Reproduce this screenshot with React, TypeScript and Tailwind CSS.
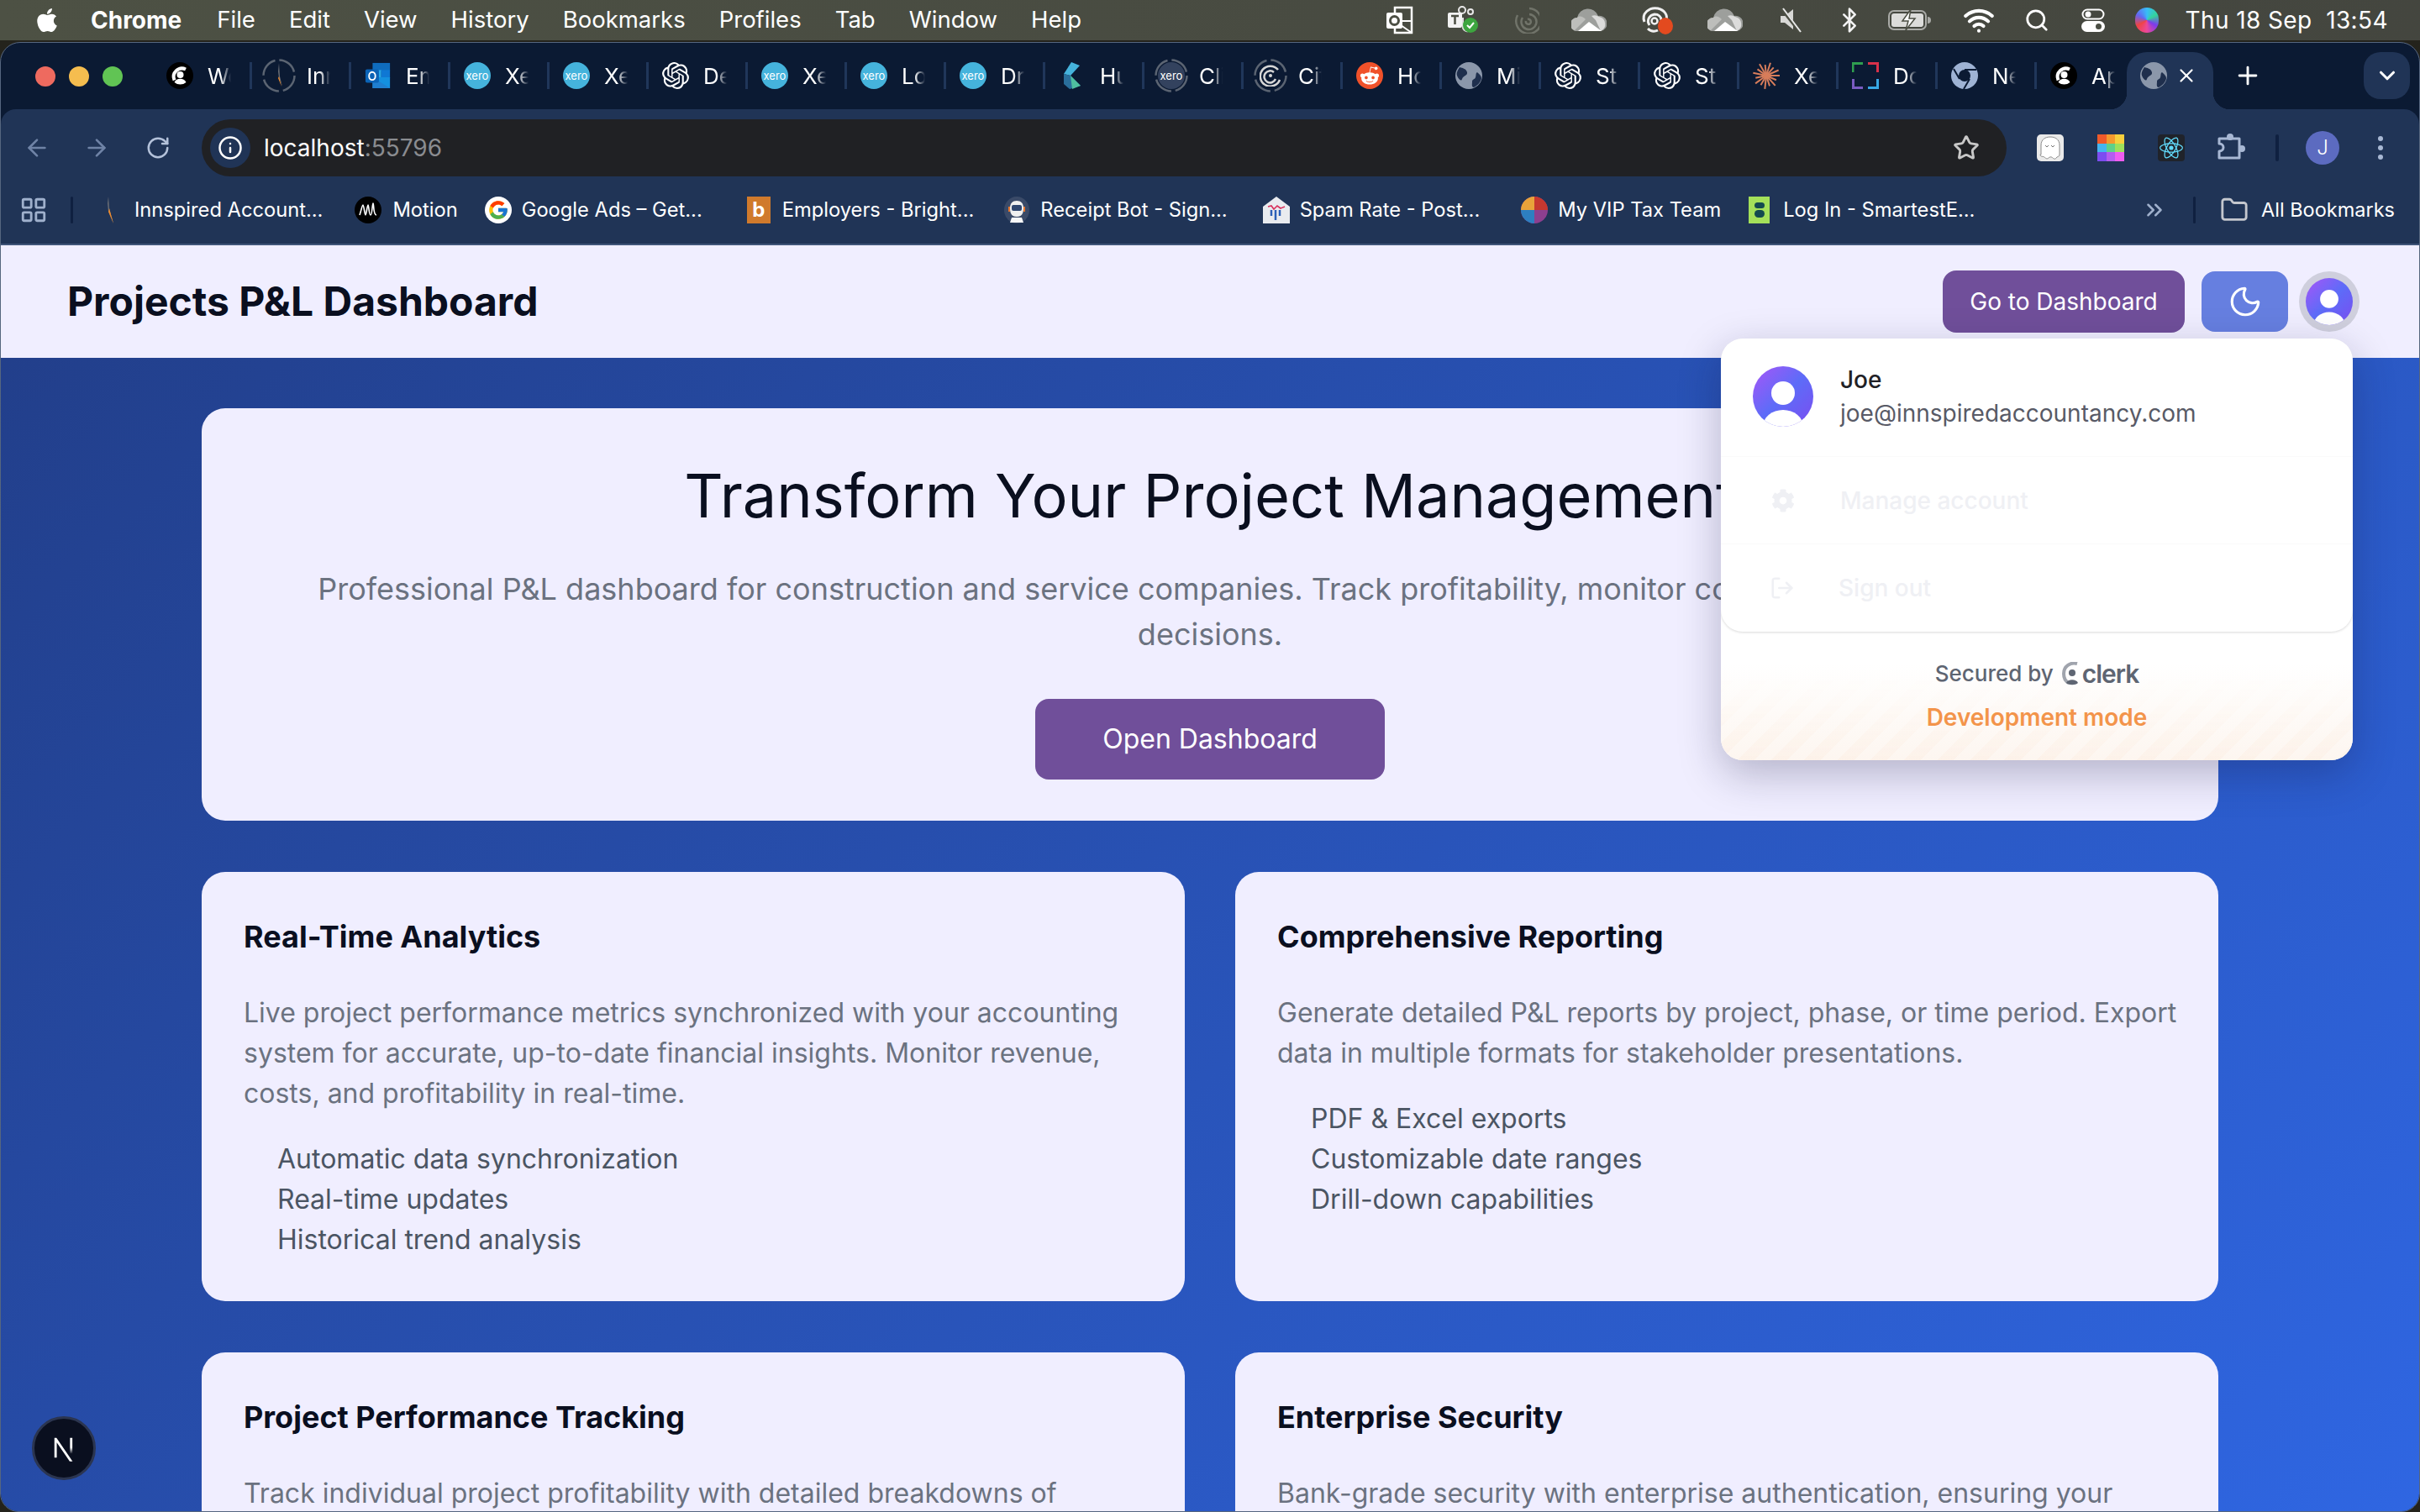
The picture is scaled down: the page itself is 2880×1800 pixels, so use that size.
import { ArrowLeft, ArrowRight, RotateCw, Info, Star, Plus, ChevronDown, Moon, ChevronsRight, Folder, LayoutGrid, Search, Bluetooth, Wifi, LogOut, X } from "lucide-react";
import { FaApple, FaCog, FaRedditAlien } from "react-icons/fa";
import { FcGoogle } from "react-icons/fc";
import { SiOpenai, SiReact } from "react-icons/si";
import type { ReactNode } from "react";

const font = "font-['Inter','Liberation_Sans',sans-serif]";

function Xero({ dim }: { dim?: boolean }) {
  return (
    <div className={`flex h-8 w-8 items-center justify-center rounded-full text-[13px] leading-none text-white ${dim ? "bg-[#33425e]" : "bg-[#45b3dc]"}`}>xero</div>
  );
}

function ClerkMark({ size = 32 }: { size?: number }) {
  return (
    <svg width={size} height={size} viewBox="0 0 32 32">
      <circle cx="16" cy="16" r="16" fill="#000" />
      <path d="M23 8.5a10 10 0 0 0-13.5 13" fill="none" stroke="#fff" strokeWidth="4" />
      <circle cx="16.5" cy="15" r="4" fill="#fff" />
      <path d="M9.5 24a8 8 0 0 1 14 0 11 11 0 0 1-14 0z" fill="#fff" />
    </svg>
  );
}

function Globe({ size = 32 }: { size?: number }) {
  return (
    <svg width={size} height={size} viewBox="0 0 32 32">
      <circle cx="16" cy="16" r="16" fill="#8b97aa" />
      <path d="M5 6c4 1 8 2 9 6s-5 4-6 8-5-1-6-4 1-7 3-10zM26 12c2 2 5 4 5 7s-4 9-9 11c-3 0-2-4-2-7s3-2 4-5 0-5 2-6z" fill="#1f2f4d" />
    </svg>
  );
}

function RingIcon({ children }: { children: ReactNode }) {
  return (
    <div className="relative flex h-10 w-10 shrink-0 items-center justify-center">
      <svg width="40" height="40" viewBox="0 0 40 40" className="absolute inset-0">
        <circle cx="20" cy="20" r="18.5" fill="none" stroke="#5b6472" strokeWidth="2.5" strokeDasharray="24 5" />
      </svg>
      {children}
    </div>
  );
}

function Spiral({ size = 26, color = "#d6d6d6" }: { size?: number; color?: string }) {
  return (
    <svg width={size} height={size} viewBox="0 0 26 26" fill="none" stroke={color} strokeWidth="2.5">
      <path d="M22 6a12 12 0 1 0 2 12M17 9a7 7 0 1 0 2 8" />
      <circle cx="13" cy="13" r="2" fill={color} stroke="none" />
    </svg>
  );
}

function Outlook() {
  return (
    <svg width="34" height="34" viewBox="0 0 34 34">
      <rect x="10" y="1" width="22" height="10" fill="#0f6cbd" />
      <rect x="10" y="10" width="11" height="10" fill="#28a8ea" />
      <rect x="21" y="10" width="11" height="10" fill="#0f78d4" />
      <path d="M10 19h22v14H10z" fill="#1490df" />
      <path d="M10 19l22 14H10z" fill="#1f7fd0" />
      <rect x="1" y="9" width="17" height="17" rx="2" fill="#0b63b6" />
      <ellipse cx="9.5" cy="17.5" rx="4" ry="5" fill="none" stroke="#fff" strokeWidth="2" />
    </svg>
  );
}

function Claude() {
  const rays = [0, 24, 48, 72, 96, 120, 144, 168, 192, 216, 240, 264, 288, 312, 336];
  return (
    <svg width="32" height="32" viewBox="0 0 32 32">
      {rays.map((a, i) => (
        <line key={a} x1="16" y1="16" x2={16 + (i % 2 ? 13 : 16) * Math.cos((a * Math.PI) / 180)} y2={16 + (i % 2 ? 13 : 16) * Math.sin((a * Math.PI) / 180)} stroke="#d77d5b" strokeWidth="2" />
      ))}
    </svg>
  );
}

function DocIcon() {
  return (
    <svg width="32" height="32" viewBox="0 0 32 32" fill="none" strokeWidth="3">
      <path d="M1 12V1.5h12" stroke="#2f9e4f" />
      <path d="M19 1.5h11.5V12" stroke="#d8314a" />
      <path d="M30.5 20v10.5H19" stroke="#37a8e6" />
      <path d="M13 30.5H1.5V20" stroke="#7a5bc2" />
    </svg>
  );
}

function Hubdoc() {
  return (
    <svg width="32" height="32" viewBox="0 0 32 32">
      <path d="M15 0l10 4-11 12-8-2z" fill="#45b3dc" />
      <path d="M6 14l8 2 12 12-13 4-7-6z" fill="#2a6f9c" />
      <path d="M14 16l12 12-10 4z" fill="#4fbf9f" />
    </svg>
  );
}

function BrightIcon() {
  return (
    <div className="flex h-8 w-[28px] items-center justify-center bg-[#d07a2c] text-[24px] font-bold leading-none text-white">b</div>
  );
}

function MotionIcon() {
  return (
    <svg width="32" height="32" viewBox="0 0 32 32">
      <circle cx="16" cy="16" r="16" fill="#000" />
      <path d="M6 22c2-6 3-12 4-12s2 12 3 12 2-12 3-12 1 12 3 12 2-14 3-14 0 14 4 14" fill="none" stroke="#fff" strokeWidth="1.6" />
    </svg>
  );
}

function ReceiptBot() {
  return (
    <svg width="32" height="32" viewBox="0 0 32 32">
      <ellipse cx="16" cy="16" rx="15" ry="16" fill="#3a4a68" />
      <path d="M8 14c0-6 3-9 8-9s8 3 8 9-2 10-8 10-8-4-8-10z" fill="#f0f0f0" />
      <rect x="10" y="10" width="12" height="7" rx="2" fill="#2f4770" />
      <path d="M10 25h12l2 6H8z" fill="#f7f7f7" />
      <path d="M6 12h2v6H6zM24 12h2v6h-2z" fill="#e8772e" />
    </svg>
  );
}

function SpamIcon() {
  return (
    <svg width="32" height="32" viewBox="0 0 32 32">
      <path d="M0 12L16 0l16 12v20H0z" fill="#e9ebef" />
      <path d="M6 12l4-1 3 4 4-4 4 3 5-2" fill="none" stroke="#d8315b" strokeWidth="1.6" />
      <path d="M10 16v7M15 16v12M20 16v7" stroke="#2b5fb8" strokeWidth="2.5" />
    </svg>
  );
}

function TaxIcon() {
  return (
    <svg width="32" height="32" viewBox="0 0 32 32">
      <ellipse cx="16" cy="16" rx="16" ry="16" fill="#8c3f8f" />
      <path d="M16 0a16 16 0 0 0-16 16h16z" fill="#e8a33a" />
      <path d="M16 0a16 16 0 0 1 16 16H16z" fill="#c6382f" />
      <path d="M0 16a16 16 0 0 0 16 16V16z" fill="#2d7fc1" />
    </svg>
  );
}

function SmartestIcon() {
  return (
    <div className="flex h-8 w-[25px] flex-col items-center justify-center gap-[2px] bg-[#a4e05a]">
      <div className="h-[7px] w-3 rounded-full bg-[#134a4f]" />
      <div className="h-[9px] w-3 rounded-full bg-[#134a4f]" />
    </div>
  );
}

function Cloud() {
  return (
    <svg width="42" height="28" viewBox="0 0 42 28">
      <path d="M7 27a8 8 0 0 1 0-16 13 13 0 0 1 25-2 9 9 0 0 1 3 18z" fill="#9d9f9c" />
      <path d="M7 27a8 8 0 0 1 0-16c3-3 7-1 10 2L4 26z" fill="#bdbebb" />
      <path d="M24 9a9 9 0 0 1 9 1 9 9 0 0 1 2 17l-6-13z" fill="#dcdcdb" />
      <path d="M8 27l13-11 15 11z" fill="#fff" />
    </svg>
  );
}

const tabs: { icon: ReactNode; t: string }[] = [
  { icon: <ClerkMark />, t: "Workspace" },
  { icon: <RingIcon><svg width="24" height="30" viewBox="0 0 24 30"><path d="M12 0l1 16 3 12-4-10-1-8z" fill="#6b6f76" /><path d="M12 16l3 12-4-10z" fill="#ef8a2a" /></svg></RingIcon>, t: "Innspired" },
  { icon: <Outlook />, t: "Email" },
  { icon: <Xero />, t: "Xero" },
  { icon: <Xero />, t: "Xero" },
  { icon: <SiOpenai size={32} color="#fff" />, t: "Deep" },
  { icon: <Xero />, t: "Xero" },
  { icon: <Xero />, t: "Login" },
  { icon: <Xero />, t: "Dr" },
  { icon: <Hubdoc />, t: "Hubdoc" },
  { icon: <RingIcon><Xero dim /></RingIcon>, t: "Client" },
  { icon: <RingIcon><Spiral /></RingIcon>, t: "Cita" },
  { icon: <div className="flex h-8 w-8 items-center justify-center rounded-full bg-[#f0512a]"><FaRedditAlien size={24} color="#fff" /></div>, t: "Home" },
  { icon: <Globe />, t: "Mi" },
  { icon: <SiOpenai size={32} color="#fff" />, t: "St" },
  { icon: <SiOpenai size={32} color="#fff" />, t: "St" },
  { icon: <Claude />, t: "Xero" },
  { icon: <DocIcon />, t: "Doc" },
  { icon: <svg width="32" height="32" viewBox="0 0 32 32"><circle cx="16" cy="16" r="16" fill="#9fb3d4" /><circle cx="16" cy="16" r="7" fill="#0b1a33" /><path d="M16 9h14M10 20L3 8M22 20l-7 12" stroke="#0b1a33" strokeWidth="2" /></svg>, t: "New" },
  { icon: <ClerkMark />, t: "App" },
];

const bookmarks: { icon: ReactNode; t: string; cls: string }[] = [
  { icon: <svg width="16" height="32" viewBox="0 0 16 32"><path d="M7 0l1 14 5 18-6-14-1-10z" fill="#6b6f76" /><path d="M8 14l5 18-6-14z" fill="#ef8a2a" /></svg>, t: "Innspired Account...", cls: "ml-[35px] gap-[22px]" },
  { icon: <MotionIcon />, t: "Motion", cls: "ml-[38px] gap-[13px]" },
  { icon: <div className="flex h-8 w-8 items-center justify-center rounded-full bg-white"><FcGoogle size={26} /></div>, t: "Google Ads – Get...", cls: "ml-[32px] gap-[12px]" },
  { icon: <BrightIcon />, t: "Employers - Bright...", cls: "ml-[53px] gap-[14px]" },
  { icon: <ReceiptBot />, t: "Receipt Bot - Sign...", cls: "ml-[35px] gap-[12px]" },
  { icon: <SpamIcon />, t: "Spam Rate - Post...", cls: "ml-[42px] gap-[12px]" },
  { icon: <TaxIcon />, t: "My VIP Tax Team", cls: "ml-[49px] gap-[12px]" },
  { icon: <SmartestIcon />, t: "Log In - SmartestE...", cls: "ml-[33px] gap-[16px]" },
];

const status: { icon: ReactNode; cls: string }[] = [
  { cls: "", icon: <svg width="32" height="34" viewBox="0 0 32 34"><path d="M10 2h20v30H10z" fill="none" stroke="#fff" strokeWidth="2.5" /><path d="M10 18h20v14H10z" fill="none" stroke="#fff" strokeWidth="2" /><path d="M10 18l20 14" stroke="#fff" strokeWidth="2" /><rect x="0" y="8" width="19" height="19" rx="2" fill="#fff" /><circle cx="9.5" cy="17.5" r="5" fill="none" stroke="#4b4e43" strokeWidth="3" /></svg> },
  { cls: "ml-[15px]", icon: <svg width="36" height="34" viewBox="0 0 36 34"><circle cx="17" cy="5" r="4" fill="none" stroke="#e8e8e8" strokeWidth="2" /><circle cx="27" cy="7" r="3" fill="none" stroke="#e8e8e8" strokeWidth="2" /><rect x="0" y="8" width="17" height="18" rx="2" fill="#f2f2f2" /><path d="M4 12h9M8.5 12v10" stroke="#4b4e43" strokeWidth="2.5" /><path d="M18 14v10a5 5 0 0 0 6 6" fill="none" stroke="#ddd" strokeWidth="2" /><circle cx="27" cy="23" r="9" fill="#3da53f" /><path d="M23 23l3 3 5-6" fill="none" stroke="#fff" strokeWidth="2" /></svg> },
  { cls: "ml-[15px]", icon: <svg width="32" height="32" viewBox="0 0 32 32" fill="none" stroke="#707369" strokeWidth="2.5"><path d="M20 2a15 15 0 1 1-14 8M20 9a9 9 0 1 1-8 4M18 15a3 3 0 1 1-2 2" /></svg> },
  { cls: "ml-[15px]", icon: <Cloud /> },
  { cls: "ml-[20px]", icon: <svg width="40" height="36" viewBox="0 0 40 36"><path d="M6 20C2 10 12 2 22 4c8 2 12 8 10 14" fill="none" stroke="#f0f0f0" strokeWidth="3" /><path d="M12 24c-4-6 0-12 6-13 5 0 8 3 8 7" fill="none" stroke="#f0f0f0" strokeWidth="3" /><circle cx="18" cy="19" r="3.5" fill="none" stroke="#f0f0f0" strokeWidth="2.5" /><path d="M10 28c4 4 8 4 12 2" fill="none" stroke="#f0f0f0" strokeWidth="3" /><ellipse cx="31" cy="25" rx="9" ry="10" fill="#e34a1f" /></svg> },
  { cls: "ml-[22px]", icon: <Cloud /> },
  { cls: "ml-[18px]", icon: <svg width="28" height="30" viewBox="0 0 28 30"><path d="M2 10h5l10-8v24L7 18H2z" fill="#d8d8d6" /><path d="M3 1l22 28" stroke="#4b4e43" strokeWidth="4" /><path d="M5 1l21 28" stroke="#e8e8e8" strokeWidth="2" /></svg> },
  { cls: "ml-[10px]", icon: <Bluetooth size={32} color="#f2f2f2" strokeWidth={2} /> },
  { cls: "ml-[12px]", icon: <svg width="52" height="26" viewBox="0 0 52 26"><rect x="1" y="2" width="44" height="22" rx="6" fill="none" stroke="#a9aaa6" strokeWidth="2" /><rect x="4" y="5" width="38" height="16" rx="3" fill="#dcdcda" /><path d="M27 0L17 14h7l-3 11 11-14h-7z" fill="#fff" stroke="#4b4e43" strokeWidth="1.5" /><path d="M47 9a4 4 0 0 1 0 8z" fill="#a9aaa6" /></svg> },
  { cls: "ml-[22px]", icon: <Wifi size={38} color="#fff" strokeWidth={2.6} /> },
  { cls: "ml-[9px]", icon: <Search size={30} color="#fff" strokeWidth={2.2} /> },
  { cls: "ml-[7px]", icon: <svg width="28" height="28" viewBox="0 0 28 28"><rect x="1.5" y="1.5" width="25" height="11" rx="5.5" fill="none" stroke="#fff" strokeWidth="2" /><circle cx="8" cy="7" r="3.5" fill="#fff" /><rect x="0" y="15" width="28" height="13" rx="6.5" fill="#fff" /><circle cx="20.5" cy="21.5" r="3.5" fill="#4b4e43" /></svg> },
  { cls: "ml-[4px]", icon: <div className="h-[30px] w-[28px] rounded-full bg-[conic-gradient(#38bdf8,#34d399,#7c3aed,#ec4899,#ef4444,#6366f1,#38bdf8)]" /> },
];

function MenuBar() {
  const items = ["File", "Edit", "View", "History", "Bookmarks", "Profiles", "Tab", "Window", "Help"];
  return (
    <div className="flex h-[48px] items-center bg-[linear-gradient(to_right,#4d5144,#44463f)] pl-[40px] pr-[38px] text-[27.5px] text-white">
      <FaApple size={32} color="#fff" />
      <span className="ml-[36px] text-[28px] font-bold">Chrome</span>
      <div className="ml-[42px] flex gap-[40px]">
        {items.map((m) => (
          <span key={m}>{m}</span>
        ))}
      </div>
      <div className="ml-auto flex items-center">
        {status.map((s, i) => (
          <div key={i} className={`flex w-[60px] justify-center ${s.cls}`}>{s.icon}</div>
        ))}
      </div>
      <span className="ml-[16px] whitespace-nowrap text-[28px] tracking-[0.4px]">Thu 18 Sep&nbsp; 13:54</span>
    </div>
  );
}

function TabStrip() {
  return (
    <div className="flex h-[79px] shrink-0 items-start pl-[41px] pr-[11px]">
      <div className="mt-[28px] flex gap-[16px]">
        <div className="h-6 w-6 rounded-full bg-[#ee6a5f]" />
        <div className="h-6 w-6 rounded-full bg-[#f5bd4f]" />
        <div className="h-6 w-6 rounded-full bg-[#61c454]" />
      </div>
      <div className="ml-[36px] mt-[23px] flex">
        {tabs.map((tab, i) => (
          <div key={i} className="flex h-[32px] w-[118px] items-center border-r-[3px] border-[#20365a] pl-[16px] last:border-r-0">
            <div className="flex h-8 w-8 items-center justify-center">{tab.icon}</div>
            <span className="ml-[17px] w-[28px] overflow-hidden whitespace-nowrap text-[26px] text-white [mask-image:linear-gradient(to_right,#000_55%,transparent)]">{tab.t}</span>
          </div>
        ))}
      </div>
      <div className="relative z-[1] ml-[-11px] mt-[11px] flex h-[68px] w-[103px] items-center rounded-t-[24px] bg-[#203456] pb-[12px] pl-[16px]">
        <div className="absolute bottom-0 left-[-20px] h-[20px] w-[20px] bg-[radial-gradient(circle_at_0_0,transparent_20px,#203456_20.5px)]" />
        <div className="absolute bottom-0 right-[-20px] h-[20px] w-[20px] bg-[radial-gradient(circle_at_100%_0,transparent_20px,#203456_20.5px)]" />
        <Globe />
        <X size={26} color="#fff" className="ml-[10px]" />
      </div>
      <Plus size={34} color="#fff" className="ml-[24px] mt-[22px]" />
      <div className="ml-auto mt-[11px] flex h-[56px] w-[55px] items-center justify-center rounded-[20px] bg-[#203456]">
        <ChevronDown size={30} color="#fff" strokeWidth={2.5} />
      </div>
    </div>
  );
}

function GhostExt() {
  return (
    <svg width="32" height="32" viewBox="0 0 32 32">
      <rect width="32" height="32" rx="5" fill="#e9e9e9" />
      <path d="M5 24V13C5 6 10 3 16 3s11 3 11 10v11c0 3-3 2-4 4s-3 1-4 0-3-2-5 0-4 0-5-1-5 0-5-3z" fill="#fff" stroke="#8c8c8c" strokeWidth="1" />
      <path d="M10 13l2 2 2-2M17 13l2 2 2-2" fill="none" stroke="#777" strokeWidth="1" />
    </svg>
  );
}

function PuzzleExt() {
  return (
    <svg width="34" height="34" viewBox="0 0 34 34" fill="none">
      <path d="M2 6h24v23H2v-8c3 0 5-2 5-4.500S5 12 2 12z" stroke="#a8b8d4" strokeWidth="3" strokeLinejoin="round" />
      <circle cx="15" cy="4" r="4" fill="#a8b8d4" />
      <circle cx="29" cy="18" r="4" fill="#a8b8d4" />
    </svg>
  );
}

function Toolbar() {
  return (
    <div className="flex h-[84px] shrink-0 items-start rounded-t-[18px] bg-[#203456] pl-[27px] pt-[12px]">
      <div className="flex h-[68px] items-center">
        <ArrowLeft size={32} color="#6f83a6" />
        <ArrowRight size={32} color="#6f83a6" className="ml-[39px]" />
        <RotateCw size={30} color="#b4c2da" className="ml-[42px]" />
        <div className="ml-[37px] flex h-[68px] w-[2148px] items-center rounded-full bg-[#202124] pl-[10px] pr-[32px]">
          <div className="flex h-[48px] w-[48px] items-center justify-center rounded-full bg-[#203456]">
            <Info size={30} color="#fff" />
          </div>
          <span className="ml-[16px] text-[28px] text-white">localhost<span className="text-[#8a8c90]">:55796</span></span>
          <Star size={32} color="#c8c8c8" className="ml-auto" strokeWidth={2.2} />
        </div>
        <div className="ml-[36px]"><GhostExt /></div>
        <div className="ml-[40px] grid h-8 w-8 grid-cols-3">
          {["#ef5a2a", "#f59a2d", "#f7cf3c", "#45b5f0", "#5fd08a", "#9ee05a", "#7c4df0", "#b45cf0", "#ef5cf0"].map((c) => (
            <div key={c} className="h-full w-full" style={{ background: c }} />
          ))}
        </div>
        <div className="ml-[40px] flex h-8 w-8 items-center justify-center rounded-[4px] bg-[#20232a]">
          <SiReact size={28} color="#61dafb" />
        </div>
        <div className="ml-[39px]"><PuzzleExt /></div>
        <div className="ml-[35px] h-[32px] w-[4px] rounded-full bg-[#0f2040]" />
        <div className="ml-[32px] flex h-10 w-10 items-center justify-center rounded-full bg-[#5c6bc0] text-[24px] font-light text-white">J</div>
        <div className="ml-[46px] flex flex-col gap-[5px]">
          <div className="h-[6px] w-[6px] rounded-full bg-[#a8b8d4]" />
          <div className="h-[6px] w-[6px] rounded-full bg-[#a8b8d4]" />
          <div className="h-[6px] w-[6px] rounded-full bg-[#a8b8d4]" />
        </div>
      </div>
    </div>
  );
}

function BookmarksBar() {
  return (
    <div className="flex h-[78px] shrink-0 items-center border-b-[2px] border-[#3f5478] bg-[#203456] pb-[4px] pl-[22px] text-[23.7px] text-white">
      <LayoutGrid size={34} color="#9fb0cc" />
      <div className="ml-[27px] h-[32px] w-[3px] rounded-full bg-[#0f2040]" />
      {bookmarks.map((b) => (
        <div key={b.t} className={`flex items-center whitespace-nowrap ${b.cls}`}>
          {b.icon}
          <span>{b.t}</span>
        </div>
      ))}
      <ChevronsRight size={30} color="#9fb0cc" className="ml-auto" />
      <div className="ml-[31px] h-[32px] w-[3px] rounded-full bg-[#0f2040]" />
      <Folder size={34} color="#c4c7ce" className="ml-[29px]" />
      <span className="ml-[15px] mr-[29px] whitespace-nowrap text-[23.5px]">All Bookmarks</span>
    </div>
  );
}

function Avatar({ size }: { size: number }) {
  return (
    <svg width={size} height={size} viewBox="0 0 72 72">
      <defs>
        <linearGradient id={`av${size}`} x1="0" y1="0" x2="1" y2="1">
          <stop offset="0" stopColor="#a855f7" />
          <stop offset="0.5" stopColor="#5d6cf8" />
          <stop offset="1" stopColor="#7c4df0" />
        </linearGradient>
        <clipPath id={`clip${size}`}>
          <circle cx="36" cy="36" r="36" />
        </clipPath>
      </defs>
      <circle cx="36" cy="36" r="36" fill={`url(#av${size})`} />
      <g clipPath={`url(#clip${size})`} fill="#fff">
        <circle cx="36" cy="32" r="14" />
        <ellipse cx="36" cy="72" rx="24" ry="20" />
      </g>
    </svg>
  );
}

function ClerkLogo() {
  return (
    <svg width="22" height="28" viewBox="0 0 22 28">
      <path d="M18 2C10 0 2 5 2 14c0 5 2 9 6 11" fill="none" stroke="#a0a4ad" strokeWidth="4" />
      <circle cx="12" cy="13" r="4" fill="#5e6572" />
      <path d="M5 25c2-5 12-5 14 0-3 3-11 3-14 0z" fill="#5e6572" />
    </svg>
  );
}

function UserPopup() {
  return (
    <div className="absolute right-[79px] top-[-23px] z-10 w-[752px] overflow-hidden rounded-[26px] bg-white shadow-[0_16px_50px_rgba(20,20,60,0.28)]">
      <div className="relative z-[1] rounded-[26px] bg-white shadow-[0_1px_3px_rgba(0,0,0,0.15)]">
        <div className="flex h-[141px] items-center gap-[32px] border-b border-[#fafafa] pb-[2px] pl-[38px]">
          <Avatar size={72} />
          <div className="text-[28px] leading-[40px]">
            <div className="font-medium text-[#212126]">Joe</div>
            <div className="text-[#585a66]">joe@innspiredaccountancy.com</div>
          </div>
        </div>
        <div className="flex h-[104px] items-center gap-[54px] border-b border-[#fafafa] pl-[60px] text-[28px] font-medium text-[#eff0f4]">
          <FaCog size={28} color="#eff0f4" />
          <span>Manage account</span>
        </div>
        <div className="flex h-[104px] items-center gap-[52px] pl-[58px] text-[28px] font-medium text-[#eff0f4]">
          <LogOut size={30} />
          <span>Sign out</span>
        </div>
      </div>
      <div className="relative flex h-[153px] flex-col items-center bg-[linear-gradient(to_bottom,#ffffff_25%,#fdf6f0)] pt-[32px]">
        <div className="absolute inset-0 bg-[repeating-linear-gradient(-45deg,rgba(243,148,74,0.04)_0px,rgba(243,148,74,0.04)_14px,transparent_14px,transparent_28px)] [mask-image:linear-gradient(to_bottom,transparent_35%,#000)]" />
        <div className="relative flex items-center text-[26px] font-medium leading-[36px] text-[#5e6572]">
          Secured by
          <span className="ml-[10px]"><ClerkLogo /></span>
          <span className="ml-[2px] text-[30px] font-semibold tracking-[-1px]">clerk</span>
        </div>
        <div className="relative mt-[16px] text-[28px] font-semibold leading-[36px] text-[#f3944a]">Development mode</div>
      </div>
    </div>
  );
}

function FeatureCard({ title, body, items }: { title: string; body: string; items?: string[] }) {
  return (
    <div className="h-[511px] rounded-[28px] bg-[#f0eeff] pl-[50px] pr-[44px] pt-[54px]">
      <h3 className="text-[36px] font-bold leading-[46px] text-[#0a0f1f]">{title}</h3>
      <p className="mt-[44px] text-[32px] leading-[48px] text-[#6b7280]">{body}</p>
      {items && (
        <ul className="mt-[30px] pl-[40px] text-[32px] leading-[48px] text-[#4b5563]">
          {items.map((it) => (
            <li key={it}>{it}</li>
          ))}
        </ul>
      )}
    </div>
  );
}

function Page() {
  return (
    <div className="relative flex min-h-0 flex-1 flex-col">
      <header className="flex h-[134px] shrink-0 items-center justify-between bg-[#f0eeff] pl-[79px] pr-[71px]">
        <h1 className="text-[48px] font-bold text-[#0a0f1f]">Projects P&amp;L Dashboard</h1>
        <div className="flex items-center">
          <button className="flex h-[74px] w-[288px] items-center justify-center rounded-[16px] bg-[#704f9a] text-[28px] text-white">Go to Dashboard</button>
          <button className="ml-[20px] flex h-[72px] w-[103px] items-center justify-center rounded-[16px] bg-[#667fe0]">
            <Moon size={42} color="#fff" strokeWidth={1.8} />
          </button>
          <div className="ml-[13px] flex h-[72px] w-[72px] items-center justify-center rounded-full bg-[#cfcfdd]">
            <Avatar size={56} />
          </div>
        </div>
      </header>
      <main className="relative min-h-0 flex-1 overflow-hidden bg-[linear-gradient(135deg,#223f8b,#2f66e2)] px-[239px] pt-[60px]">
        <section className="flex h-[491px] flex-col items-center rounded-[28px] bg-[#f0eeff] px-[120px] pt-[50px] text-center">
          <h2 className="whitespace-nowrap text-[72px] leading-[108px] text-[#0a0f1f]">Transform Your Project Management</h2>
          <p className="mt-[30px] text-[36px] leading-[54px] text-[#6b7280]">Professional P&amp;L dashboard for construction and service companies. Track profitability, monitor costs, and make data-driven decisions.</p>
          <button className="mt-[50px] flex h-[96px] w-[416px] items-center justify-center rounded-[16px] bg-[#704f9a] text-[32px] text-white">Open Dashboard</button>
        </section>
        <div className="mt-[61px] grid grid-cols-2 gap-x-[60px] gap-y-[61px]">
          <FeatureCard title="Real-Time Analytics" body="Live project performance metrics synchronized with your accounting system for accurate, up-to-date financial insights. Monitor revenue, costs, and profitability in real-time." items={["Automatic data synchronization", "Real-time updates", "Historical trend analysis"]} />
          <FeatureCard title="Comprehensive Reporting" body="Generate detailed P&L reports by project, phase, or time period. Export data in multiple formats for stakeholder presentations." items={["PDF & Excel exports", "Customizable date ranges", "Drill-down capabilities"]} />
          <FeatureCard title="Project Performance Tracking" body="Track individual project profitability with detailed breakdowns of" />
          <FeatureCard title="Enterprise Security" body="Bank-grade security with enterprise authentication, ensuring your" />
        </div>
      </main>
      <div className="absolute bottom-[37px] left-[37px] z-10 flex h-[76px] w-[76px] items-center justify-center rounded-full border-[3px] border-[#2b3550] bg-[#0a0f1f]">
        <svg width="36" height="36" viewBox="0 0 32 32">
          <defs>
            <linearGradient id="nfade" x1="0" y1="0" x2="0" y2="1">
              <stop offset="0.6" stopColor="#fff" />
              <stop offset="1" stopColor="#fff" stopOpacity="0" />
            </linearGradient>
          </defs>
          <path d="M6 26V5h2.200l17 25h-3L8.500 10v16z" fill="#fff" />
          <path d="M22.500 5H25v17h-2.500z" fill="url(#nfade)" />
        </svg>
      </div>
      <div className="pointer-events-none absolute inset-x-0 top-[134px]">
        <UserPopup />
      </div>
    </div>
  );
}

export default function App() {
  return (
    <div className={`flex h-[1800px] w-[2880px] flex-col overflow-hidden bg-[#24231c] ${font}`}>
      <MenuBar />
      <div className="mt-[2px] flex min-h-0 flex-1 flex-col overflow-hidden rounded-t-[24px] rounded-b-[22px] border border-[#56667f] bg-[#0b1a33]">
        <TabStrip />
        <Toolbar />
        <BookmarksBar />
        <Page />
      </div>
    </div>
  );
}
